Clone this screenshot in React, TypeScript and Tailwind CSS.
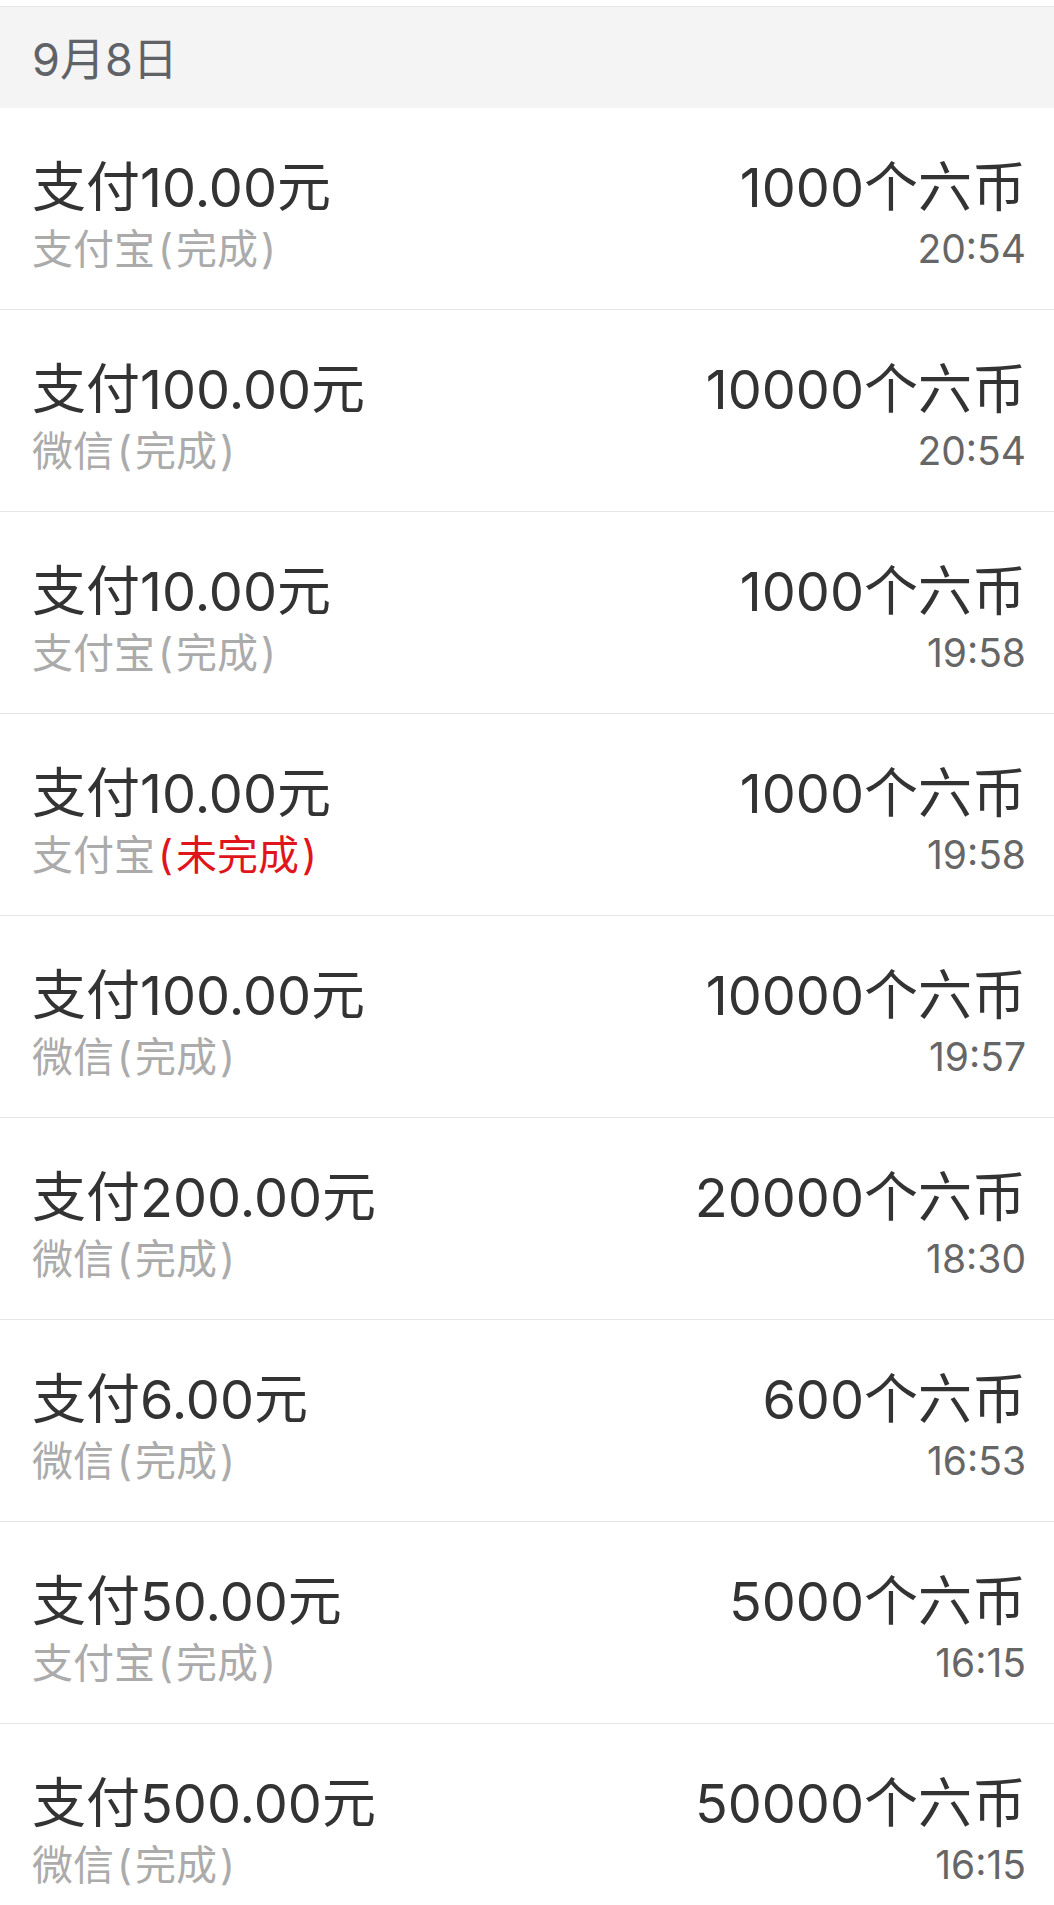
const records = [
  { amount: "10.00", method: "支付宝", done: true, coins: "1000", time: "20:54" },
  { amount: "100.00", method: "微信", done: true, coins: "10000", time: "20:54" },
  { amount: "10.00", method: "支付宝", done: true, coins: "1000", time: "19:58" },
  { amount: "10.00", method: "支付宝", done: false, coins: "1000", time: "19:58" },
  { amount: "100.00", method: "微信", done: true, coins: "10000", time: "19:57" },
  { amount: "200.00", method: "微信", done: true, coins: "20000", time: "18:30" },
  { amount: "6.00", method: "微信", done: true, coins: "600", time: "16:53" },
  { amount: "50.00", method: "支付宝", done: true, coins: "5000", time: "16:15" },
  { amount: "500.00", method: "微信", done: true, coins: "50000", time: "16:15" },
];

const Status = ({ label }: { label: string }) => (
  <>
    <span className="mx-[3px]">(</span>
    {label}
    <span className="mx-[3px]">)</span>
  </>
);

const App = () => {
  return (
    <div className="w-[1054px] h-[1905px] overflow-hidden bg-white font-['Inter','Noto_Sans_CJK_SC',sans-serif]">
      <div className="h-[6px] bg-white" />
      <div className="h-[102px] border-t border-[#e6e6e6] bg-[#f4f4f4] flex items-center pl-[32px] pt-[4px]">
        <span className="text-[45px] leading-none text-[#5f6368]">9月8日</span>
      </div>
      {records.map((r, i) => (
        <div
          key={i}
          className="h-[202px] border-b border-[#e6e6e6] flex justify-between pl-[32px] pr-[28px] pt-[49px]"
        >
          <div className="flex flex-col">
            <span className="text-[54px] leading-[62px] text-[#333333]">支付{r.amount}元</span>
            <span className="text-[41px] leading-[60px] text-[#ababab]">
              {r.method}
              {r.done ? (
                <Status label="完成" />
              ) : (
                <span className="text-[#e0141b]">
                  <Status label="未完成" />
                </span>
              )}
            </span>
          </div>
          <div className="flex flex-col items-end">
            <span className="text-[54px] leading-[62px] text-[#333333]">{r.coins}个六币</span>
            <span className="text-[39px] leading-[60px] text-[#666666]">{r.time}</span>
          </div>
        </div>
      ))}
    </div>
  );
};

export default App;
